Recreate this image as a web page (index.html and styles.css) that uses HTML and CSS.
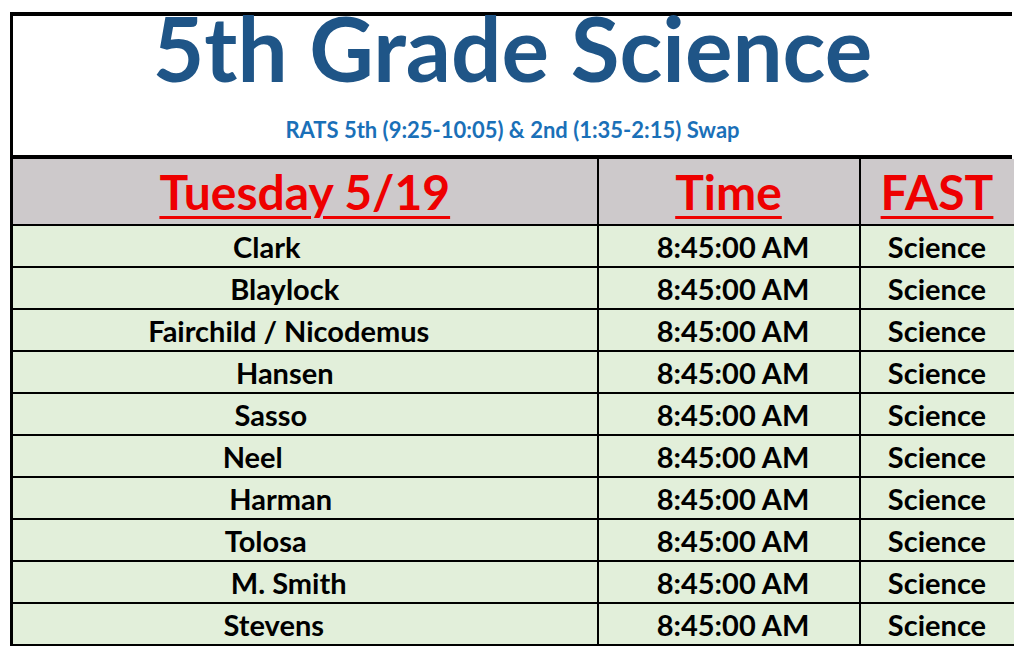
FILE: index.html
```html
<!DOCTYPE html>
<html>
<head>
<meta charset="utf-8">
<link rel="stylesheet" href="styles.css">
</head>
<body>
<div class="sheet">
  <div class="title-box">
    <h1 class="title">5th Grade Science</h1>
    <p class="subtitle">RATS 5th (9:25-10:05) &amp; 2nd (1:35-2:15) Swap</p>
  </div>
  <table class="grid">
    <colgroup><col class="c1"><col class="c2"><col class="c3"></colgroup>
    <thead>
      <tr class="head"><th class="first"><span>Tuesday 5/19</span></th><th><span>Time</span></th><th><span>FAST</span></th></tr>
    </thead>
    <tbody>
      <tr><td class="first"><span style="margin-left:-76px">Clark</span></td><td class="time">8:45:00 AM</td><td>Science</td></tr>
      <tr><td class="first"><span style="margin-left:-40px">Blaylock</span></td><td class="time">8:45:00 AM</td><td>Science</td></tr>
      <tr><td class="first"><span style="margin-left:-32px">Fairchild / Nicodemus</span></td><td class="time">8:45:00 AM</td><td>Science</td></tr>
      <tr><td class="first"><span style="margin-left:-40px">Hansen</span></td><td class="time">8:45:00 AM</td><td>Science</td></tr>
      <tr><td class="first"><span style="margin-left:-68px">Sasso</span></td><td class="time">8:45:00 AM</td><td>Science</td></tr>
      <tr><td class="first"><span style="margin-left:-104px">Neel</span></td><td class="time">8:45:00 AM</td><td>Science</td></tr>
      <tr><td class="first"><span style="margin-left:-48px">Harman</span></td><td class="time">8:45:00 AM</td><td>Science</td></tr>
      <tr><td class="first"><span style="margin-left:-78px">Tolosa</span></td><td class="time">8:45:00 AM</td><td>Science</td></tr>
      <tr><td class="first"><span style="margin-left:-32px">M. Smith</span></td><td class="time">8:45:00 AM</td><td>Science</td></tr>
      <tr><td class="first"><span style="margin-left:-62px">Stevens</span></td><td class="time">8:45:00 AM</td><td>Science</td></tr>
    </tbody>
  </table>
</div>
</body>
</html>
```
FILE: styles.css
```css
html, body {
  margin: 0;
  padding: 0;
  background: #fff;
}
body {
  font-family: "Lato", "Open Sans", sans-serif;
  color: #000;
}
.sheet {
  margin: 12px 0 0 10px;
  width: 1002px;
}
.title-box {
  border-top: 4px solid #000;
  border-left: 3px solid #000;
  border-bottom: 4px solid #000;
  height: 139px;
  display: flex;
  flex-direction: column;
  align-items: center;
}
.title {
  margin: 0;
  font-size: 89px;
  line-height: 64px;
  font-weight: 700;
  color: #1f5587;
  letter-spacing: 0;
}
.subtitle {
  margin: 37px 0 0;
  font-size: 22px;
  line-height: 26px;
  font-weight: 700;
  color: #1a70b8;
}
.grid {
  border-collapse: collapse;
  table-layout: fixed;
  width: 1002px;
}
.c1 { width: 586px; }
.c2 { width: 262px; }
.c3 { width: 154px; }
.grid th, .grid td {
  padding: 0;
  text-align: center;
  border-right: 2px solid #000;
  border-bottom: 2px solid #000;
  white-space: nowrap;
  overflow: hidden;
}
.grid th:last-child, .grid td:last-child { border-right: none; }
.grid .first { border-left: 3px solid #000; }
.head th {
  background: #cdc9cb;
  height: 65px;
  font-size: 48px;
  font-weight: 700;
  color: #ee0000;
}
.head th span {
  text-decoration: underline;
  text-decoration-thickness: 3px;
  text-underline-offset: 6px;
}
.grid td {
  background: #e2efda;
  height: 40px;
  font-size: 29px;
  font-weight: 700;
}
.grid td.time { padding-left: 9px; }
.grid td span { display: inline-block; }
```
